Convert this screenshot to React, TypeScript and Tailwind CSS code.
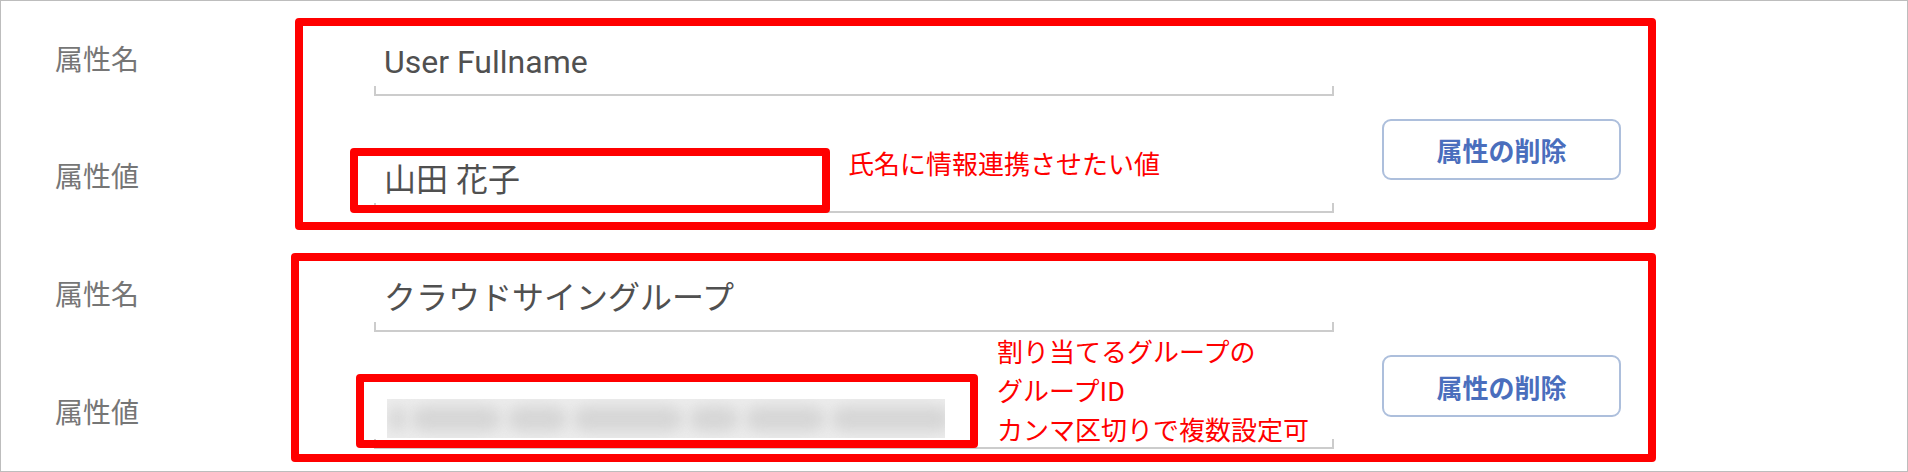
const cjk = "font-['Noto_Sans_CJK_JP',sans-serif]";

// widths of the blurred blobs standing in for the hidden group IDs
const blobs = [16, 90, 60, 110, 50, 80, 120];

function Underline({ className = '' }: { className?: string }) {
  return <div className={`h-[10px] border-x-2 border-b-2 border-[#cccccc] ${className}`} />;
}

function DeleteButton({ className = '' }: { className?: string }) {
  return (
    <button
      className={`ml-[48px] flex w-[239px] shrink-0 items-center justify-center self-start rounded-[9px] border-2 border-[#adbfdc] bg-white text-[26px] font-bold text-[#4a6ebd] ${cjk} ${className}`}
    >
      属性の削除
    </button>
  );
}

function Labels({ className = '', gap }: { className?: string; gap: string }) {
  return (
    <div className={`shrink-0 pl-[54px] pt-[20px] text-[28px] leading-[40px] text-[#767676] ${cjk} ${className}`}>
      <div>属性名</div>
      <div className={gap}>属性値</div>
    </div>
  );
}

export default function App() {
  return (
    <div className="h-[472px] w-[1908px] border border-[#bdbdbd] bg-white font-['Roboto','Noto_Sans_CJK_JP',sans-serif]">
      {/* User Fullname */}
      <section className="mt-[17px] flex">
        <Labels className="w-[294px]" gap="mt-[77px]" />
        <div className="flex h-[212px] w-[1361px] rounded-[4px] border-[8px] border-[#ff0000]">
          <div className="relative ml-[71px] w-[960px] shrink-0">
            <div className="mt-[16px] h-[40px] pl-[10px] text-[32px] leading-[40px] text-[#505050]">User Fullname</div>
            <Underline className="mt-[4px]" />
            <div className="mt-[64px] h-[40px] pl-[10px] text-[32px] leading-[40px] text-[#505050]">山田 花子</div>
            <Underline className="mt-[3px]" />

            <div className="absolute left-[-24px] top-[122px] h-[65px] w-[480px] rounded-[4px] border-[8px] border-[#ff0000]" />
            <div className={`absolute left-[474px] top-[117px] whitespace-nowrap text-[26px] leading-[40px] text-[#ff0000] ${cjk}`}>
              氏名に情報連携させたい値
            </div>
          </div>
          <DeleteButton className="mt-[93px] h-[61px]" />
        </div>
      </section>

      {/* クラウドサイングループ */}
      <section className="mt-[23px] flex">
        <Labels className="w-[290px]" gap="mt-[78px]" />
        <div className="flex h-[209px] w-[1365px] rounded-[4px] border-[8px] border-[#ff0000]">
          <div className="relative ml-[75px] w-[960px] shrink-0">
            <div className="mt-[17px] h-[40px] pl-[10px] text-[32px] leading-[40px] text-[#505050]">クラウドサイングループ</div>
            <Underline className="mt-[4px]" />
            <div className="ml-[13px] mt-[67px] flex h-[39px] w-[558px] items-center gap-[6px] overflow-hidden bg-[#ededed] px-[2px]">
              {blobs.map((w, i) => (
                <div key={i} className="h-[26px] shrink-0 rounded-full bg-[#d6d6d6] blur-[7px]" style={{ width: w }} />
              ))}
            </div>
            <Underline className="mt-[1px] h-[9px]" />

            <div className="absolute left-[-18px] top-[113px] h-[74px] w-[622px] rounded-[4px] border-[8px] border-[#ff0000]" />
            <div className={`absolute left-[623px] top-[70px] whitespace-nowrap text-[26px] leading-[39px] text-[#ff0000] ${cjk}`}>
              <div>割り当てるグループの</div>
              <div>グループID</div>
              <div>カンマ区切りで複数設定可</div>
            </div>
          </div>
          <DeleteButton className="mt-[94px] h-[62px]" />
        </div>
      </section>
    </div>
  );
}
